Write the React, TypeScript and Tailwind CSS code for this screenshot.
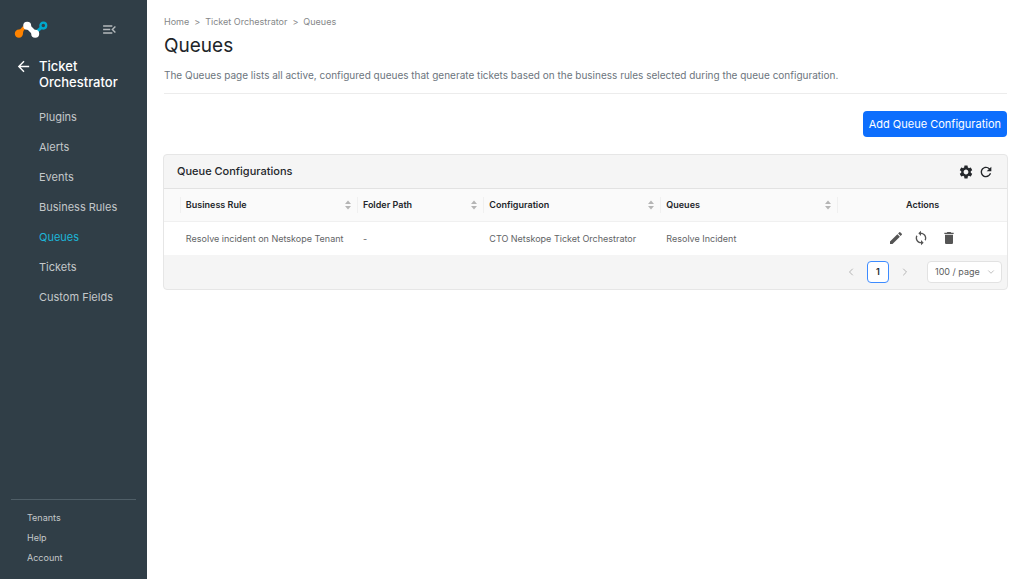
import clsx from "clsx";
import {
    MdArrowBack,
    MdDelete,
    MdEdit,
    MdMenuOpen,
    MdRefresh,
    MdSettings,
    MdSync,
} from "react-icons/md";
import { ChevronDown, ChevronLeft, ChevronRight } from "lucide-react";

interface QueueConfig {
    businessRule: string;
    folderPath: string;
    configuration: string;
    queues: string;
}

const navItems = ["Plugins", "Alerts", "Events", "Business Rules", "Queues", "Tickets", "Custom Fields"];
const footerItems = ["Tenants", "Help", "Account"];
const columns = ["Business Rule", "Folder Path", "Configuration", "Queues"];

const rows: QueueConfig[] = [
    {
        businessRule: "Resolve incident on Netskope Tenant",
        folderPath: "-",
        configuration: "CTO Netskope Ticket Orchestrator",
        queues: "Resolve Incident",
    },
];

function Logo() {
    return (
        <svg width="34" height="18" viewBox="0 0 34 18" fill="none" aria-hidden="true">
            {/* Orange drop */}
            <path d="M4.9 9.6C6.9 9.4 7.6 7.4 9.2 6L11.4 9C9.8 10 9 11.4 9 13.6A4.1 4.1 0 1 1 4.9 9.6Z" fill="#ff8300" />
            {/* Teal ring */}
            <path d="M23 11.4L27 7.8" stroke="#00a8cd" strokeWidth="3" />
            <circle cx="29.3" cy="5.6" r="2.9" stroke="#00a8cd" strokeWidth="2.3" />
            {/* White link */}
            <path d="M13.2 5.8L21.2 13.8" stroke="#fff" strokeWidth="5" />
            <circle cx="13.2" cy="5.8" r="4" fill="#fff" />
            <circle cx="21.2" cy="13.7" r="4" fill="#fff" />
        </svg>
    );
}

function Sidebar() {
    return (
        <aside className="flex min-h-screen w-[147px] shrink-0 flex-col bg-[#303e47] text-[#c4c8ca]">
            <div className="flex items-center justify-between pt-5 pr-[29px] pl-[14px]">
                <Logo />
                <button type="button" aria-label="Collapse menu" className="text-[#b4b9bc]">
                    <MdMenuOpen size={17} />
                </button>
            </div>

            <div className="flex gap-[7px] pt-5 pl-[15px] text-white">
                <a href="#" aria-label="Back">
                    <MdArrowBack size={17} />
                </a>
                <h2 className="text-[13px] leading-4 font-medium">Ticket Orchestrator</h2>
            </div>

            <nav className="pt-3 pl-[39px]">
                <ul>
                    {navItems.map((item) => (
                        <li key={item}>
                            <a
                                href="#"
                                className={clsx(
                                    "block py-[7px] text-[11px] leading-4",
                                    item === "Queues" && "text-[#1cb5d8]",
                                )}
                            >
                                {item}
                            </a>
                        </li>
                    ))}
                </ul>
            </nav>

            <ul className="mx-[11px] mt-auto mb-[11px] border-t border-[#4f5e67] pt-2 pl-4">
                {footerItems.map((item) => (
                    <li key={item}>
                        <a href="#" className="block text-[9px] leading-5">
                            {item}
                        </a>
                    </li>
                ))}
            </ul>
        </aside>
    );
}

function Sorter() {
    return (
        <svg width="6" height="10" viewBox="0 0 6 10" fill="#b5b5b5" aria-hidden="true">
            <path d="M3 0.4L6 4H0Z" />
            <path d="M3 9.6L6 6H0Z" />
        </svg>
    );
}

function QueueTable() {
    return (
        <table className="w-full table-fixed text-left text-[9px]">
            <colgroup>
                <col className="w-[2%]" />
                <col className="w-[21%]" />
                <col className="w-[15%]" />
                <col className="w-[21%]" />
                <col className="w-[21%]" />
                <col className="w-[20%]" />
            </colgroup>
            <thead className="bg-[#fafafa] text-[#24272b]">
                <tr className="h-8 border-b border-[#f0f0f0]">
                    <th className="p-0">
                        <div className="h-4 border-r border-[#f0f0f0]" />
                    </th>
                    {columns.map((column) => (
                        <th key={column} className="p-0 font-semibold">
                            <button
                                type="button"
                                className="flex h-4 w-full items-center justify-between border-r border-[#f0f0f0] pr-[6px] pl-[5px]"
                            >
                                {column}
                                <Sorter />
                            </button>
                        </th>
                    ))}
                    <th className="p-0 text-center font-semibold">Actions</th>
                </tr>
            </thead>
            <tbody className="bg-white text-[#626466]">
                {rows.map((row) => (
                    <tr key={row.businessRule} className="h-[34px]">
                        <td className="p-0" />
                        <td className="p-0 pl-[5px] whitespace-nowrap">{row.businessRule}</td>
                        <td className="p-0 pl-[5px]">{row.folderPath}</td>
                        <td className="p-0 pl-[5px] whitespace-nowrap">{row.configuration}</td>
                        <td className="p-0 pl-[5px]">{row.queues}</td>
                        <td className="p-0">
                            <div className="flex items-center justify-center text-[#555]">
                                <button type="button" aria-label="Edit">
                                    <MdEdit size={16} />
                                </button>
                                <button type="button" aria-label="Sync" className="ml-[9px]">
                                    <MdSync size={16} />
                                </button>
                                <button type="button" aria-label="Delete" className="ml-3">
                                    <MdDelete size={16} />
                                </button>
                            </div>
                        </td>
                    </tr>
                ))}
            </tbody>
        </table>
    );
}

function Pagination() {
    return (
        <div className="flex h-[34px] items-center justify-end pr-[5px] text-[9px] text-[#5c5e60]">
            <button type="button" aria-label="Previous page" className="text-[#b4b4b4]">
                <ChevronLeft size={12} strokeWidth={2} />
            </button>
            <button
                type="button"
                className="mx-[10px] size-[22px] rounded-[4px] border border-[#3d8bff] bg-white font-semibold text-[#24272b]"
            >
                1
            </button>
            <button type="button" aria-label="Next page" className="text-[#b4b4b4]">
                <ChevronRight size={12} strokeWidth={2} />
            </button>
            <div className="relative ml-4">
                <select
                    aria-label="Rows per page"
                    className="h-[22px] w-[75px] appearance-none rounded-[4px] border border-[#e2e2e2] bg-white pl-[7px]"
                >
                    <option>100 / page</option>
                </select>
                <ChevronDown
                    size={10}
                    strokeWidth={2}
                    className="pointer-events-none absolute top-[6px] right-[6px] text-[#b4b4b4]"
                />
            </div>
        </div>
    );
}

export default function App() {
    return (
        <div className="flex min-h-screen bg-white font-['Inter','Liberation_Sans',sans-serif]">
            <Sidebar />

            <main className="min-w-0 flex-1 pt-4 pr-4 pl-4">
                <nav aria-label="Breadcrumb" className="flex gap-[5px] pl-px text-[9px] leading-3 text-[#858789]">
                    <a href="#">Home</a>
                    <span>&gt;</span>
                    <a href="#">Ticket Orchestrator</a>
                    <span>&gt;</span>
                    <a href="#">Queues</a>
                </nav>

                <header className="mx-px border-b border-[#ececec] pb-[10px]">
                    <h1 className="pt-1 text-[19px] leading-7 text-[#212529]">Queues</h1>
                    <p className="pt-[7px] text-[10px] leading-4 text-[#6c757d]">
                        The Queues page lists all active, configured queues that generate tickets based on the business
                        rules selected during the queue configuration.
                    </p>
                </header>

                <div className="flex justify-end pt-[17px] pr-px">
                    <button type="button" className="h-[26px] rounded-[4px] bg-[#0d6efd] px-[6px] text-[11px] text-white">
                        Add Queue Configuration
                    </button>
                </div>

                <section className="mt-[17px] overflow-hidden rounded-[4px] border border-[#e6e6e6] bg-[#f5f5f5]">
                    <div className="flex h-[34px] items-center justify-between border-b border-[#e2e2e2] pr-[13px] pl-[13px] text-[#24272b]">
                        <h2 className="text-[11px] font-medium">Queue Configurations</h2>
                        <div className="flex items-center gap-1">
                            <button type="button" aria-label="Table settings">
                                <MdSettings size={16} />
                            </button>
                            <button type="button" aria-label="Refresh">
                                <MdRefresh size={16} />
                            </button>
                        </div>
                    </div>
                    <QueueTable />
                    <Pagination />
                </section>
            </main>
        </div>
    );
}
